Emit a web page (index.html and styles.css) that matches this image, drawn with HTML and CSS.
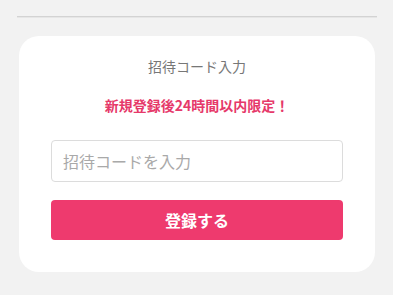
FILE: index.html
```html
<!DOCTYPE html>
<html lang="ja">
<head>
<meta charset="utf-8">
<link rel="stylesheet" href="styles.css">
</head>
<body>
<div class="page">
  <div class="divider"></div>
  <div class="card">
    <div class="title">招待コード入力</div>
    <div class="notice">新規登録後24時間以内限定！</div>
    <input class="code-input" type="text" placeholder="招待コードを入力">
    <button class="submit" type="button">登録する</button>
  </div>
</div>
</body>
</html>
```
FILE: styles.css
```css
html, body {
  margin: 0;
  padding: 0;
  background: #f2f2f2;
  font-family: "Noto Sans CJK JP", "Noto Sans", sans-serif;
}
.page {
  padding: 16px 16px 0 17px;
}
.divider {
  height: 1px;
  background: #d3d3d3;
  border-bottom: 1px solid #e6e6e6;
}
.card {
  margin: 18px 2px 0 2px;
  background: #fff;
  border-radius: 20px;
  padding: 20px 32px 32px;
  display: flex;
  flex-direction: column;
}
.title {
  text-align: center;
  font-size: 14px;
  line-height: 20px;
  color: #777;
}
.notice {
  margin-top: 19px;
  text-align: center;
  font-size: 14px;
  line-height: 20px;
  font-weight: bold;
  color: #e6396a;
}
.code-input {
  margin-top: 25px;
  height: 42px;
  box-sizing: border-box;
  border: 1px solid #dcdcdc;
  border-radius: 4px;
  padding: 0 11px;
  font-family: inherit;
  font-size: 16px;
  color: #333;
  outline: none;
}
.code-input::placeholder {
  color: #a9a9a9;
}
.submit {
  margin-top: 18px;
  height: 40px;
  border: none;
  border-radius: 4px;
  background: #ee3a6e;
  color: #fff;
  font-family: inherit;
  font-size: 16px;
  font-weight: bold;
}
```
